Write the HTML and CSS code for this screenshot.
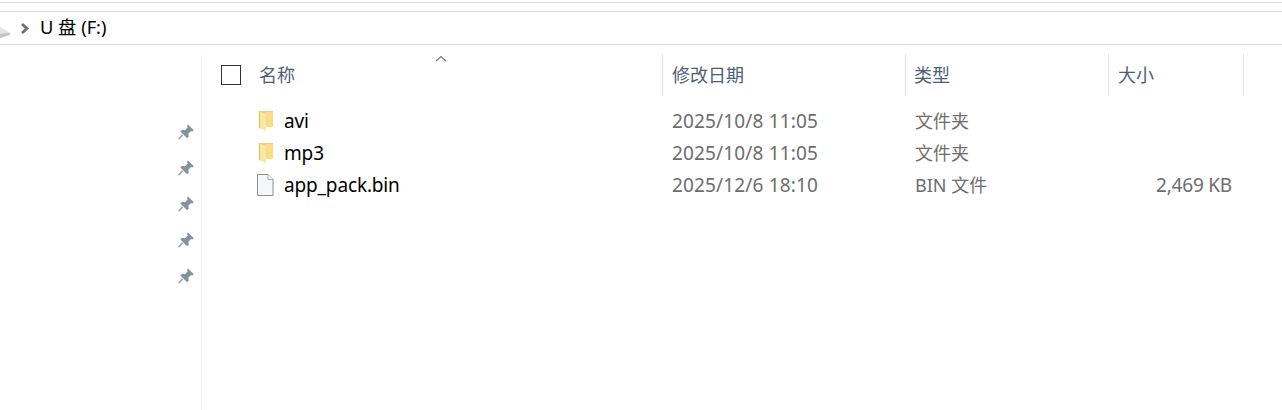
FILE: index.html
```html
<!DOCTYPE html>
<html lang="zh-CN">
<head>
    <meta charset="UTF-8">
    <title>U 盘 (F:)</title>
    <link rel="stylesheet" href="styles.css">
</head>
<body>
    <div class="top-strip"></div>

    <div class="address-bar">
        <svg class="drive-icon" width="10" height="12" viewBox="0 0 10 12">
            <polygon points="0,3 10,7 10,9 0,12" fill="#c4c4c4"/>
            <polygon points="0,1 10,6.500 0,8" fill="#e4e4e4"/>
        </svg>
        <svg class="crumb-arrow" width="9" height="11" viewBox="0 0 9 11">
            <path d="M2 1l5 4.500-5 4.500" fill="none" stroke="#6e6e6e" stroke-width="2.800"/>
        </svg>
        <span class="crumb">U 盘 (F:)</span>
    </div>

    <div class="main">
        <div class="sidebar">
            <svg class="pin" width="18" height="18" viewBox="0 0 16 16"><use href="#pin-shape"/></svg>
            <svg class="pin" width="18" height="18" viewBox="0 0 16 16"><use href="#pin-shape"/></svg>
            <svg class="pin" width="18" height="18" viewBox="0 0 16 16"><use href="#pin-shape"/></svg>
            <svg class="pin" width="18" height="18" viewBox="0 0 16 16"><use href="#pin-shape"/></svg>
            <svg class="pin" width="18" height="18" viewBox="0 0 16 16"><use href="#pin-shape"/></svg>
        </div>

        <div class="files">
            <div class="file-header">
                <div class="col col-name">
                    <span class="checkbox"></span>
                    <span>名称</span>
                    <svg class="sort-arrow" width="12" height="7" viewBox="0 0 12 7">
                        <path d="M1 6l5-4.500 5 4.500" fill="none" stroke="#7a7a7a" stroke-width="1.100"/>
                    </svg>
                </div>
                <div class="col col-date">修改日期</div>
                <div class="col col-type">类型</div>
                <div class="col col-size">大小</div>
            </div>

            <div class="file-row">
                <div class="cell cell-name">
                    <svg class="icon" width="18" height="22" viewBox="0 0 18 22"><use href="#folder-shape"/></svg>
                    <span>avi</span>
                </div>
                <div class="cell cell-date">2025/10/8 11:05</div>
                <div class="cell cell-type">文件夹</div>
                <div class="cell cell-size"></div>
            </div>
            <div class="file-row">
                <div class="cell cell-name">
                    <svg class="icon" width="18" height="22" viewBox="0 0 18 22"><use href="#folder-shape"/></svg>
                    <span>mp3</span>
                </div>
                <div class="cell cell-date">2025/10/8 11:05</div>
                <div class="cell cell-type">文件夹</div>
                <div class="cell cell-size"></div>
            </div>
            <div class="file-row">
                <div class="cell cell-name">
                    <svg class="icon" width="18" height="22" viewBox="0 0 18 22">
                        <path d="M1.500 .5h10.500l5 5v16h-15.500z" fill="#f6f7f8" stroke="#8f8f8f"/>
                        <path d="M12 .5v5h5" fill="#fff" stroke="#a8a8a8"/>
                    </svg>
                    <span>app_pack.bin</span>
                </div>
                <div class="cell cell-date">2025/12/6 18:10</div>
                <div class="cell cell-type">BIN 文件</div>
                <div class="cell cell-size">2,469 KB</div>
            </div>
        </div>
    </div>

    <!-- shared icon shapes -->
    <svg class="defs" width="0" height="0">
        <defs>
            <symbol id="pin-shape" viewBox="0 0 16 16">
                <path d="M9.500 1l5.500 5.500-1.500 1-1-.5-2.500 2.500.5 2.500-1.500 1.500-6-6 1.500-1.500 2.500.5 2.500-2.500-.5-1z" fill="#84929e"/>
                <path d="M5 10.500l-3.500 4" stroke="#9aa6b0" stroke-width="1.500" fill="none"/>
            </symbol>
            <symbol id="folder-shape" viewBox="0 0 18 22">
                <path d="M3 1h14v16h-14z" fill="#f3cd6a"/>
                <path d="M10 2h7v15h-7z" fill="#f7dc8e"/>
                <path d="M3 1l7 3v17l-7-3z" fill="#fbe6a2"/>
                <path d="M3 1l1 .5v17l-1-.5z" fill="#e5b84e"/>
            </symbol>
        </defs>
    </svg>
</body>
</html>
```

FILE: styles.css
```css
body {
    margin: 0;
    height: 410px;
    overflow: hidden;
    background-color: white;
    color: #000;
    font-family: "Noto Sans", "Noto Sans CJK SC", sans-serif;
    font-size: 18px;
}

.top-strip {
    height: 2px;
    margin-bottom: 8px;
    border-bottom: 1px solid #dcdcdc;
}

/* Address bar */
.address-bar {
    display: flex;
    align-items: center;
    height: 32px;
    border-top: 1px solid #dcdcdc;
    border-bottom: 1px solid #dcdcdc;
}
.drive-icon {
    margin-top: 8px;
}
.crumb-arrow {
    margin-left: 10px;
}
.crumb {
    margin-left: 11px;
    margin-bottom: 5px;
    font-size: 18.3px;
}

/* Main area */
.main {
    display: flex;
    padding-top: 9px;
}
.sidebar {
    width: 202px;
    height: 356px;
    flex-shrink: 0;
    display: flex;
    flex-direction: column;
    gap: 18px;
    padding: 69px 6px 0 0;
    box-sizing: border-box;
    align-items: flex-end;
    border-right: 1px solid #f3f3f3;
}
.pin {
    display: block;
}

.files {
    flex: 1;
}

.file-header,
.file-row {
    display: grid;
    grid-template-columns: 461px 243px 203px 135px;
}
.file-header {
    height: 42px;
    margin-bottom: 9px;
    color: #4c607a;
}
.col {
    display: flex;
    align-items: center;
    box-sizing: border-box;
    padding-left: 9px;
    padding-bottom: 2px;
    border-right: 1px solid #e5e5e5;
}
.col-name {
    position: relative;
    padding-left: 19px;
}
.col-type {
    padding-left: 8px;
}
.checkbox {
    width: 18px;
    height: 18px;
    margin-top: 2px;
    margin-right: 18px;
    border: 1px solid #333;
}
.sort-arrow {
    position: absolute;
    left: 233px;
    top: 1px;
}

.file-row {
    height: 32px;
    align-items: center;
    color: #6d6d6d;
}
.cell {
    padding-left: 9px;
}
.cell-name {
    display: flex;
    align-items: center;
    padding-left: 54px;
    color: #000;
}
.cell-name .icon {
    margin-right: 10px;
}
.cell-name span {
    font-size: 19px;
    letter-spacing: -0.15px;
}
.cell-date {
    font-size: 19px;
    letter-spacing: 0.15px;
}
.cell-type {
    padding-bottom: 2px;
}
.cell-size {
    padding: 0 12px 0 0;
    text-align: right;
    font-size: 19px;
    letter-spacing: -0.2px;
}
.defs {
    position: absolute;
}
```
